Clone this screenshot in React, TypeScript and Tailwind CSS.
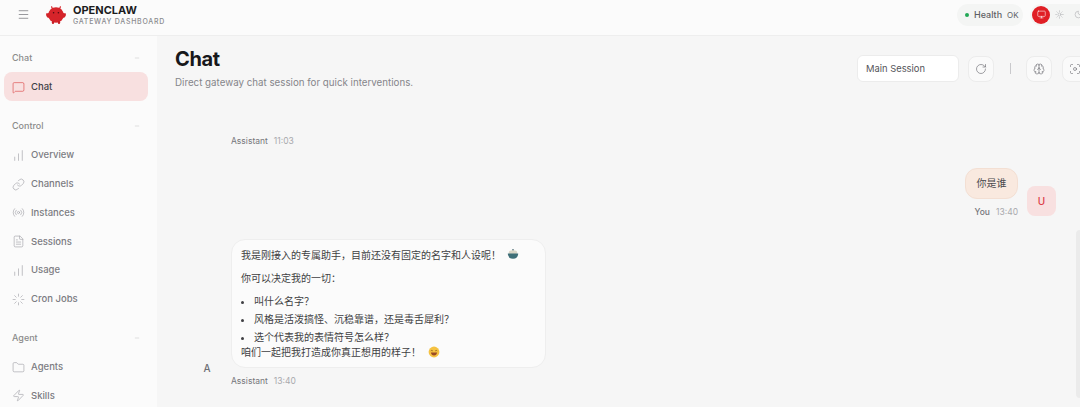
import React from "react";
import {
  Menu, MessageSquare, ChartNoAxesColumnIncreasing, Link, Radio, FileText, Loader, Folder, Zap,
  Monitor, Sun, Moon, RotateCw, Brain, Focus, Minus,
} from "lucide-react";

const font = { fontFamily: '"Inter","Noto Sans CJK SC",sans-serif' };

function Logo() {
  return (
    <svg width="22" height="22" viewBox="0 0 22 22" className="shrink-0">
      <path d="M4 9 L1 9.5 Q0.6 12 3 14 L5 13 Z" fill="#d12328" />
      <path d="M18 9 L21 9.5 Q21.4 12 19 14 L17 13 Z" fill="#d12328" />
      <circle cx="11" cy="11" r="7.8" fill="#d6242a" />
      <path d="M7.4 4.8 L6.6 2.8 M14.6 4.8 L15.4 2.8" stroke="#d6242a" strokeWidth="1.2" strokeLinecap="round" />
      <ellipse cx="8" cy="18.4" rx="1.2" ry="1.6" fill="#c71f25" />
      <ellipse cx="14" cy="18.4" rx="1.2" ry="1.6" fill="#c71f25" />
      <circle cx="8.6" cy="8.8" r="0.8" fill="#4a0d10" />
      <circle cx="13.4" cy="8.8" r="0.8" fill="#4a0d10" />
    </svg>
  );
}

function Bowl() {
  return (
    <svg width="12" height="12" viewBox="0 0 12 12" className="ml-[6px] inline-block align-[-1px]">
      <ellipse cx="6" cy="4.6" rx="4.2" ry="2.4" fill="#d9d6c6" />
      <circle cx="6" cy="1.8" r="0.8" fill="#4a6a70" />
      <path d="M0.8 5.6 H11.2 Q11 10.6 6 10.8 Q1 10.6 0.8 5.6 Z" fill="#3f6f78" />
    </svg>
  );
}

function Smile() {
  return (
    <svg width="12" height="12" viewBox="0 0 12 12" className="ml-[7px] inline-block align-[-2px]">
      <circle cx="6" cy="6" r="5.4" fill="#f5c242" />
      <path d="M2.8 4.9 Q3.8 3.9 4.8 4.9 M7.2 4.9 Q8.2 3.9 9.2 4.9" stroke="#8a5a1c" strokeWidth="0.8" fill="none" />
      <path d="M2.9 6.6 H9.1 Q8.6 9.6 6 9.6 Q3.4 9.6 2.9 6.6 Z" fill="#9a4a24" />
    </svg>
  );
}

type Item = { label: string; icon: React.ElementType };

function Group({ title, items, mb, active }: { title: string; items: Item[]; mb: string; active?: boolean }) {
  return (
    <section className={mb}>
      <div className="flex h-[14px] items-center justify-between px-2 text-[9px] font-medium text-[#8b8b8b]">
        <span>{title}</span>
        <Minus size={6} strokeWidth={1.5} className="text-[#b5b5b5]" />
      </div>
      <div className="mt-[7px] flex flex-col gap-px">
        {items.map(({ label, icon: Icon }) => (
          <div
            key={label}
            className={
              active
                ? "flex h-[29px] items-center gap-[6px] rounded-lg bg-[#f8e0e0] pt-[2px] pl-2 text-[9.5px] font-medium text-[#3f3f46]"
                : "flex h-[27.8px] items-center gap-[6px] pt-[3px] pl-2 text-[9.5px] font-medium text-[#7c7c82]"
            }
          >
            <Icon size={13} strokeWidth={1.2} className={active ? "text-[#dc4a4a]" : "text-[#a3a3a8]"} />
            <span>{label}</span>
          </div>
        ))}
      </div>
    </section>
  );
}

function IconButton({ icon: Icon }: { icon: React.ElementType }) {
  return (
    <button className="flex h-[26px] w-[26px] shrink-0 items-center justify-center rounded-lg border border-[#ececec] bg-[#fafafa] text-[#6f6f75]">
      <Icon size={12} strokeWidth={1.3} />
    </button>
  );
}

export default function App() {
  return (
    <div style={font} className="flex h-[407px] w-[1080px] flex-col overflow-hidden bg-[#f6f6f6]">
      <header className="flex h-[36px] shrink-0 items-center justify-between border-b border-[#eeeeee] bg-[#fbfbfb] pb-[6px] pl-[17px]">
        <div className="flex items-center">
          <Menu size={13} strokeWidth={1.3} className="text-[#6f6f75]" />
          <div className="ml-[15px]"><Logo /></div>
          <div className="ml-[6px] flex flex-col pt-[2px]">
            <span className="text-[11px] leading-[13px] font-bold text-[#1c1c1e]">OPENCLAW</span>
            <span className="text-[7px] leading-[10px] font-medium tracking-[0.72px] text-[#8b8b8f]">GATEWAY DASHBOARD</span>
          </div>
        </div>
        <div className="flex w-[123px] shrink-0 items-center gap-[7px] overflow-hidden">
          <div className="flex h-[22px] w-[66px] shrink-0 items-center gap-[5px] rounded-full bg-[#f4f5f4] pl-2 text-[9px] font-medium text-[#5f5f64]">
            <span className="h-[4px] w-[4px] rounded-full bg-[#22a855]" />
            <span>Health</span>
            <span className="text-[8px] font-normal">OK</span>
          </div>
          <div className="flex h-[22px] w-[60px] shrink-0 items-center gap-[4px] rounded-l-full bg-[#f4f5f4] pl-[2px]">
            <div className="flex h-[18px] w-[18px] shrink-0 items-center justify-center rounded-full bg-[#e01f25] text-white">
              <Monitor size={9} strokeWidth={1.5} />
            </div>
            <Sun size={9} strokeWidth={1.2} className="ml-[1px] shrink-0 text-[#9a9a9e]" />
            <Moon size={9} strokeWidth={1.2} className="ml-[6px] shrink-0 text-[#9a9a9e]" />
          </div>
        </div>
      </header>

      <div className="flex min-h-0 flex-1">
        <aside className="flex w-[157px] shrink-0 flex-col bg-[#fbfbfb] pt-[15px] pr-[9px] pl-1">
          <Group title="Chat" items={[{ label: "Chat", icon: MessageSquare }]} active mb="mb-[18px]" />
          <Group
            title="Control"
            mb="mb-[19px]"
            items={[
              { label: "Overview", icon: ChartNoAxesColumnIncreasing },
              { label: "Channels", icon: Link },
              { label: "Instances", icon: Radio },
              { label: "Sessions", icon: FileText },
              { label: "Usage", icon: ChartNoAxesColumnIncreasing },
              { label: "Cron Jobs", icon: Loader },
            ]}
          />
          <Group
            title="Agent"
            mb="mb-0"
            items={[
              { label: "Agents", icon: Folder },
              { label: "Skills", icon: Zap },
            ]}
          />
        </aside>

        <main className="relative min-w-0 flex-1 pl-[18px]">
          <div className="flex items-start justify-between pt-[11px]">
            <div>
              <h1 className="text-[20px] leading-[24px] font-bold tracking-[-0.4px] text-[#18181b]">Chat</h1>
              <p className="mt-[5px] text-[9.75px] leading-[14px] text-[#85858a]">
                Direct gateway chat session for quick interventions.
              </p>
            </div>
            <div className="mt-[8px] flex w-[223px] shrink-0 items-center overflow-hidden">
              <div className="flex h-[27px] w-[102px] shrink-0 items-center rounded-md border border-[#ececec] bg-white pt-px pl-2 text-[9.4px] text-[#55555a]">
                Main Session
              </div>
              <div className="ml-[9px]"><IconButton icon={RotateCw} /></div>
              <div className="mr-[15px] ml-[16px] h-[11px] w-px shrink-0 bg-[#c9c9cc]" />
              <IconButton icon={Brain} />
              <div className="ml-[10px]"><IconButton icon={Focus} /></div>
            </div>
          </div>

          <div className="flex flex-col pt-[45px]">
            <div className="ml-[56px] flex items-center gap-[6px] text-[8.5px] leading-[12px]">
              <span className="text-[#77777c]">Assistant</span>
              <span className="text-[#a9a9ad]">11:03</span>
            </div>

            <div className="mt-[21px] flex justify-end pr-6">
              <div className="flex flex-col items-end">
                <div className="rounded-[12px] border border-[#f3dfd3] bg-[#f9e9df] px-[10.5px] py-[7px] text-[10px] leading-[15px] text-[#4a4a4e]">
                  你是谁
                </div>
                <div className="mt-[7px] flex items-center gap-[6px] text-[8.5px] leading-[12px]">
                  <span className="font-medium text-[#77777c]">You</span>
                  <span className="text-[#a9a9ad]">13:40</span>
                </div>
              </div>
              <div className="mt-[18px] ml-[9px] flex h-[30px] w-[29px] items-center justify-center rounded-lg bg-[#f8e0e0] text-[10px] font-medium text-[#dc3c48]">
                U
              </div>
            </div>

            <div className="mt-[21px] flex items-end">
              <div className="mb-[10px] flex w-[56px] shrink-0 justify-center pb-[1px] pl-[8px] text-[10px] font-medium text-[#6f6f75]">
                <span>A</span>
              </div>
              <div>
                <div className="w-[315px] rounded-[14px] border border-[#eeeeee] bg-[#fbfbfb] pt-[8px] pr-2 pb-[7px] pl-[9px] text-[10px] leading-[15px] text-[#3f3f43]">
                  <p>我是刚接入的专属助手，目前还没有固定的名字和人设呢！<Bowl /></p>
                  <p className="mt-[8px]">你可以决定我的一切：</p>
                  <ul className="mt-[8px] flex list-disc flex-col gap-[3px] pl-[13px]">
                    <li>叫什么名字？</li>
                    <li>风格是活泼搞怪、沉稳靠谱，还是毒舌犀利？</li>
                    <li>选个代表我的表情符号怎么样？</li>
                  </ul>
                  <p>咱们一起把我打造成你真正想用的样子！<Smile /></p>
                </div>
                <div className="mt-[7px] flex items-center gap-[6px] text-[8.5px] leading-[12px]">
                  <span className="text-[#77777c]">Assistant</span>
                  <span className="text-[#a9a9ad]">13:40</span>
                </div>
              </div>
            </div>
          </div>

          <div className="absolute top-[194px] right-0 h-[168px] w-[4px] rounded-l-full bg-[#ebebeb]" />
        </main>
      </div>
    </div>
  );
}
